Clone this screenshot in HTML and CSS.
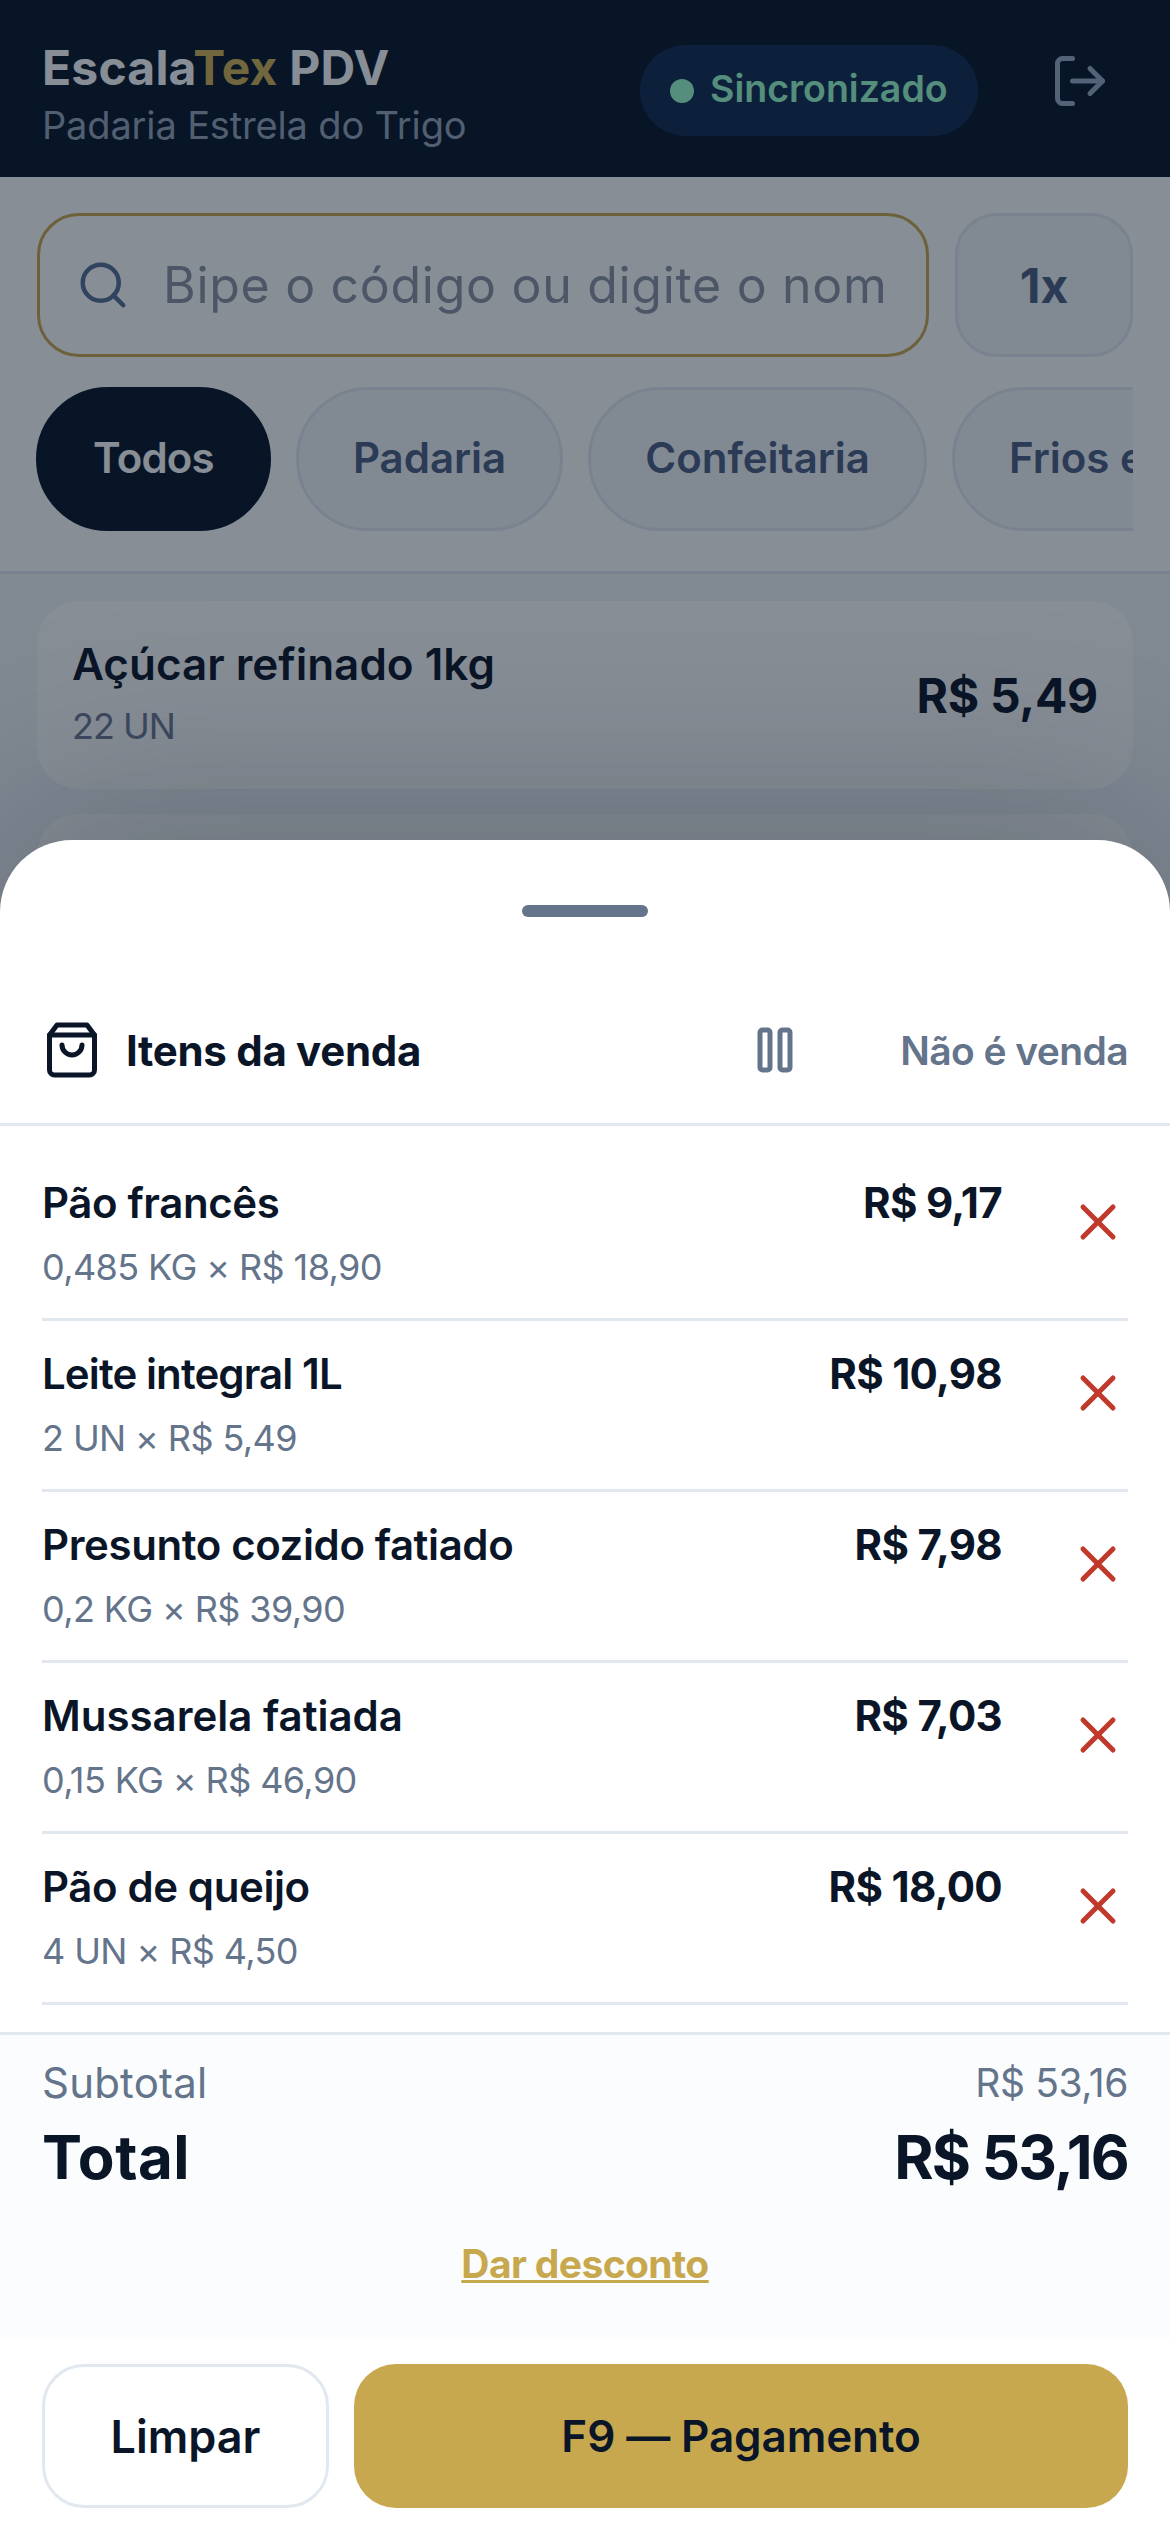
FILE: index.html
```html
<!DOCTYPE html>
<html lang="pt-BR">
<head>
<meta charset="utf-8">
<title>EscalaTex PDV</title>
<link rel="stylesheet" href="styles.css">
</head>
<body>
<div class="screen">
  <header class="topbar">
    <div class="brand">
      <div class="brand-name">Escala<span class="brand-accent">Tex</span> PDV</div>
      <div class="brand-sub">Padaria Estrela do Trigo</div>
    </div>
    <div class="sync"><span class="sync-dot"></span><span class="sync-text">Sincronizado</span></div>
    <svg class="icon-logout" viewBox="0 0 24 24" width="60" height="60" fill="none" stroke="currentColor" stroke-width="2" stroke-linecap="round" stroke-linejoin="round"><path d="M9 21H5a2 2 0 0 1-2-2V5a2 2 0 0 1 2-2h4"/><polyline points="16 17 21 12 16 7"/><line x1="21" y1="12" x2="9" y2="12"/></svg>
  </header>
  <section class="controls">
    <div class="search-row">
      <div class="search">
        <svg class="icon-search" viewBox="0 0 24 24" width="54" height="54" fill="none" stroke="currentColor" stroke-width="2" stroke-linecap="round" stroke-linejoin="round"><circle cx="11" cy="11" r="8"/><path d="m21 21-4.35-4.35"/></svg>
        <span class="search-text">Bipe o código ou digite o nome do produto</span>
      </div>
      <div class="qty">1x</div>
    </div>
    <div class="chips">
      <span class="chip chip-active">Todos</span>
      <span class="chip">Padaria</span>
      <span class="chip">Confeitaria</span>
      <span class="chip">Frios e laticínios</span>
    </div>
  </section>
  <section class="products">
    <div class="product">
      <div>
        <div class="product-name">Açúcar refinado 1kg</div>
        <div class="product-stock">22 UN</div>
      </div>
      <div class="product-price">R$ 5,49</div>
    </div>
    <div class="product"></div>
  </section>

  <div class="overlay"></div>

  <aside class="sheet">
    <div class="handle"></div>
    <div class="sheet-head">
      <svg class="icon-bag" viewBox="0 0 24 24" width="60" height="60" fill="none" stroke="currentColor" stroke-width="2" stroke-linecap="round" stroke-linejoin="round"><path d="M6 2 3 6v14a2 2 0 0 0 2 2h14a2 2 0 0 0 2-2V6l-3-4Z"/><path d="M3 6h18"/><path d="M16 10a4 4 0 0 1-8 0"/></svg>
      <div class="sheet-title">Itens da venda</div>
      <svg class="icon-pause" viewBox="0 0 24 24" width="60" height="60" fill="none" stroke="currentColor" stroke-width="2" stroke-linecap="round" stroke-linejoin="round"><rect x="14" y="4" width="4" height="16" rx="1"/><rect x="6" y="4" width="4" height="16" rx="1"/></svg>
      <div class="not-sale">Não é venda</div>
    </div>
    <div class="items">
      <div class="item">
        <div class="item-info"><div class="item-name">Pão francês</div><div class="item-sub">0,485 KG × R$ 18,90</div></div>
        <div class="item-price">R$ 9,17</div>
        <svg class="icon-x" viewBox="0 0 24 24" width="60" height="60" fill="none" stroke="currentColor" stroke-width="2" stroke-linecap="round" stroke-linejoin="round"><path d="M18 6 6 18"/><path d="m6 6 12 12"/></svg>
      </div>
      <div class="item">
        <div class="item-info"><div class="item-name item-name-tight">Leite integral 1L</div><div class="item-sub">2 UN × R$ 5,49</div></div>
        <div class="item-price">R$ 10,98</div>
        <svg class="icon-x" viewBox="0 0 24 24" width="60" height="60" fill="none" stroke="currentColor" stroke-width="2" stroke-linecap="round" stroke-linejoin="round"><path d="M18 6 6 18"/><path d="m6 6 12 12"/></svg>
      </div>
      <div class="item">
        <div class="item-info"><div class="item-name">Presunto cozido fatiado</div><div class="item-sub">0,2 KG × R$ 39,90</div></div>
        <div class="item-price">R$ 7,98</div>
        <svg class="icon-x" viewBox="0 0 24 24" width="60" height="60" fill="none" stroke="currentColor" stroke-width="2" stroke-linecap="round" stroke-linejoin="round"><path d="M18 6 6 18"/><path d="m6 6 12 12"/></svg>
      </div>
      <div class="item">
        <div class="item-info"><div class="item-name item-name-wide">Mussarela fatiada</div><div class="item-sub">0,15 KG × R$ 46,90</div></div>
        <div class="item-price">R$ 7,03</div>
        <svg class="icon-x" viewBox="0 0 24 24" width="60" height="60" fill="none" stroke="currentColor" stroke-width="2" stroke-linecap="round" stroke-linejoin="round"><path d="M18 6 6 18"/><path d="m6 6 12 12"/></svg>
      </div>
      <div class="item">
        <div class="item-info"><div class="item-name">Pão de queijo</div><div class="item-sub">4 UN × R$ 4,50</div></div>
        <div class="item-price">R$ 18,00</div>
        <svg class="icon-x" viewBox="0 0 24 24" width="60" height="60" fill="none" stroke="currentColor" stroke-width="2" stroke-linecap="round" stroke-linejoin="round"><path d="M18 6 6 18"/><path d="m6 6 12 12"/></svg>
      </div>
    </div>
    <div class="totals">
      <div class="subtotal-row"><span class="subtotal-label">Subtotal</span><span class="subtotal-value">R$ 53,16</span></div>
      <div class="total-row"><span class="total-label">Total</span><span class="total-value">R$ 53,16</span></div>
      <div class="discount">Dar desconto</div>
    </div>
    <div class="actions">
      <div class="btn btn-clear">Limpar</div>
      <div class="btn btn-pay">F9 — Pagamento</div>
    </div>
  </aside>
</div>
</body>
</html>
```
FILE: styles.css
```css
* { box-sizing: border-box; }
html, body { margin: 0; padding: 0; }
body { font-family: Inter, "Noto Sans", sans-serif; background: #f1f5f9; }

.screen {
  position: relative;
  width: 1170px;
  height: 2532px;
  overflow: hidden;
  background: #f1f5f9;
  color: #0a1628;
}

/* top bar */
.topbar {
  height: 177px;
  background: #061428;
  display: flex;
  align-items: center;
  padding: 0 60px 0 42px;
}
.brand { flex: 1; padding-top: 9px; }
.brand-name { font-size: 48px; line-height: 60px; font-weight: 700; color: #fff; letter-spacing: 0.2px; }
.brand-accent { color: #d2b155; }
.brand-sub { margin-top: 4px; font-size: 38px; line-height: 46px; color: #94a3b8; letter-spacing: -0.15px; }
.sync {
  width: 338px;
  height: 91px;
  margin-top: 4px;
  border-radius: 46px;
  background: #10294f;
  display: flex;
  align-items: center;
  gap: 16px;
  padding: 0 0 0 30px;
}
.sync-dot { width: 24px; height: 24px; border-radius: 50%; background: #9cffcd; }
.sync-text { font-size: 37.5px; font-weight: 600; color: #9cffcd; padding-bottom: 5px; }
.icon-logout { color: #9aaac4; margin: 0 0 15px 72px; flex: none; }

/* search + categories */
.controls {
  height: 397px;
  padding: 36px 37px 0;
  background: #fff;
  border-bottom: 3px solid #e2e8f0;
}
.search-row { display: flex; gap: 26px; height: 144px; }
.search {
  flex: 1;
  border: 3px solid #c8a84e;
  border-radius: 42px;
  background: #fff;
  display: flex;
  align-items: center;
  padding: 0 40px 0 36px;
  gap: 33px;
  overflow: hidden;
}
.icon-search { color: #546f94; flex: none; }
.search-text { font-size: 50px; color: #8c93a1; white-space: nowrap; overflow: hidden; letter-spacing: 0.7px; }
.qty {
  width: 178px;
  border: 3px solid #e2e8f0;
  border-radius: 42px;
  background: #f1f5f9;
  display: flex;
  align-items: center;
  justify-content: center;
  font-size: 48px;
  font-weight: 700;
  color: #4a5c80;
}
.chips { display: flex; gap: 25px; margin: 30px 0 0 -1px; height: 144px; overflow: hidden; }
.chip {
  flex: none;
  height: 144px;
  border: 3px solid #e2e8f0;
  border-radius: 72px;
  background: #f1f5f9;
  display: flex;
  align-items: center;
  padding: 0 54px 4px;
  font-size: 42px;
  font-weight: 600;
  color: #4a5c80;
}
.chip-active { background: #061428; border-color: #061428; color: #fff; letter-spacing: -0.8px; }

/* product list behind the sheet */
.products { padding: 27px 37px 0; }
.product {
  height: 188px;
  margin-bottom: 25px;
  border-radius: 42px;
  background: #fff;
  display: flex;
  align-items: center;
  justify-content: space-between;
  padding: 0 35px;
}
.product-name { font-size: 44px; line-height: 54px; font-weight: 600; }
.product-stock { margin-top: 8px; font-size: 36px; line-height: 54px; color: #6e7a94; letter-spacing: -1px; }
.product-price { font-size: 48px; font-weight: 700; letter-spacing: -0.3px; }

.overlay { position: absolute; inset: 0; background: rgba(10, 22, 40, 0.487); }

/* bottom sheet */
.sheet {
  position: absolute;
  left: 0;
  right: 0;
  bottom: 0;
  height: 1692px;
  background: #fff;
  border-radius: 72px 72px 0 0;
  box-shadow: 0 -24px 200px rgba(10, 22, 40, 0.26);
  display: flex;
  flex-direction: column;
}
.handle { width: 126px; height: 12px; border-radius: 6px; background: #64748b; margin: 65px auto 0; flex: none; }
.sheet-head {
  height: 209px;
  flex: none;
  border-bottom: 3px solid #e2e8f0;
  display: flex;
  align-items: center;
  padding: 60px 42px 0;
}
.icon-bag { color: #0a1628; flex: none; }
.sheet-title { flex: 1; margin-left: 24px; font-size: 42px; font-weight: 700; letter-spacing: -0.3px; }
.icon-pause { color: #64748b; flex: none; }
.not-sale { margin-left: 95px; font-size: 39px; font-weight: 600; color: #64748b; letter-spacing: -0.6px; }

.items { flex: 1; padding: 24px 42px 0; }
.item {
  height: 171px;
  padding-top: 21px;
  border-bottom: 3px solid #e2e8f0;
  display: flex;
  align-items: flex-start;
}
.item-info { flex: 1; }
.item-name { font-size: 42px; line-height: 63px; font-weight: 600; letter-spacing: -0.4px; }
.item-name-tight { letter-spacing: -0.9px; }
.item-name-wide { letter-spacing: 0; }
.item-sub { margin-top: 6px; font-size: 36px; line-height: 54px; color: #64748b; letter-spacing: -0.6px; }
.item-price { font-size: 42px; line-height: 63px; font-weight: 700; letter-spacing: -0.7px; }
.icon-x { color: #c0392b; flex: none; margin: 21px 0 0 66px; }

.totals {
  height: 307px;
  flex: none;
  background: #fafcfe;
  border-top: 3px solid #e2e8f0;
  padding: 21px 42px 0;
}
.subtotal-row { display: flex; justify-content: space-between; align-items: center; line-height: 54px; color: #64748b; }
.subtotal-label { font-size: 42px; letter-spacing: 0.2px; }
.subtotal-value { font-size: 39px; letter-spacing: -0.4px; }
.total-row { display: flex; justify-content: space-between; font-size: 60px; line-height: 78px; font-weight: 700; margin-top: 8px; }
.total-label { letter-spacing: 0.5px; }
.total-value { letter-spacing: -1.8px; }
.discount {
  margin-top: 41px;
  text-align: center;
  font-size: 39px;
  line-height: 54px;
  font-weight: 700;
  color: #c8a84e;
  letter-spacing: -0.6px;
  text-decoration: underline;
}
.actions { display: flex; flex: none; gap: 25px; padding: 25px 42px 24px; }
.btn {
  height: 144px;
  border-radius: 42px;
  display: flex;
  align-items: center;
  justify-content: center;
  font-weight: 600;
}
.btn-clear { width: 287px; background: #fff; border: 3px solid #e2e8f0; font-size: 45px; }
.btn-pay { flex: 1; background: #c8a84e; font-size: 44px; letter-spacing: -0.1px; }
```
